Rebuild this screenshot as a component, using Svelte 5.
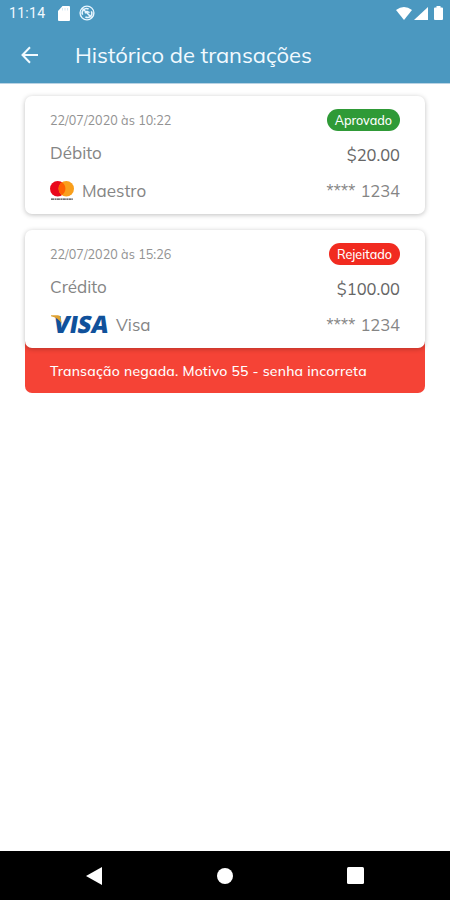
<script>
	const transactions = [
		{
			date: '22/07/2020 às 10:22',
			type: 'Débito',
			brand: 'Maestro',
			status: 'Aprovado',
			approved: true,
			amount: '$20.00',
			card: '1234'
		},
		{
			date: '22/07/2020 às 15:26',
			type: 'Crédito',
			brand: 'Visa',
			status: 'Rejeitado',
			approved: false,
			amount: '$100.00',
			card: '1234',
			error: 'Transação negada. Motivo 55 - senha incorreta'
		}
	];
</script>

<div class="screen">
	<header>
		<div class="status-bar">
			<span class="clock">11:14</span>
			<svg width="12" height="15" viewBox="0 0 12 15">
				<path d="M4.5 0H11a1 1 0 0 1 1 1v13a1 1 0 0 1-1 1H1a1 1 0 0 1-1-1V5z" fill="#fff" />
				<path d="M4.5 2v2.5M7 2v2.5M9.5 2v2.5" stroke="#d5e8f2" stroke-width="1" />
			</svg>
			<svg class="sync" width="16" height="16" viewBox="0 0 16 16" fill="none" stroke="#e8f6ff">
				<circle cx="8" cy="8" r="6.9" stroke-width="1.4" />
				<path d="M3.6 9.8A4.4 4.4 0 0 1 9.6 4M12.4 6.2a4.4 4.4 0 0 1-6 5.8" stroke-width="1.5" />
				<path d="M3.2 3.2l9.6 9.6M5.8 8.2l2.2-1.8 2.6 1.2" stroke-width="1.5" />
			</svg>
			<div class="signals">
				<svg width="16" height="13" viewBox="0 0 16 13">
					<path d="M0 3Q8-3 16 3L8 13z" fill="#fff" />
				</svg>
				<svg width="14" height="13" viewBox="0 0 14 13">
					<path d="M14 0v13H0z" fill="#fff" />
				</svg>
				<svg class="battery" width="9" height="14" viewBox="0 0 9 14">
					<path d="M2.5 0h4v1.5H8a1 1 0 0 1 1 1V13a1 1 0 0 1-1 1H1a1 1 0 0 1-1-1V2.5a1 1 0 0 1 1-1h1.5z" fill="#fff" />
				</svg>
			</div>
		</div>
		<div class="toolbar">
			<svg width="18" height="18" viewBox="0 0 18 18" fill="none" stroke="#f2faff" stroke-width="2">
				<path d="M17 9H2M9 1.3L1.5 9 9 16.7" />
			</svg>
			<h1>Histórico de transações</h1>
		</div>
	</header>

	<main>
		{#each transactions as item}
			<article>
				<div class="card">
					<div class="row top">
						<span class="date">{item.date}</span>
						<span class="badge" class:approved={item.approved}>{item.status}</span>
					</div>
					<div class="row middle">
						<span class="type">{item.type}</span>
						<span class="amount">{item.amount}</span>
					</div>
					<div class="row bottom">
						<div class="brand">
							{#if item.brand === 'Visa'}
								<svg class="visa" width="64" height="44" viewBox="0 -9 64 44">
									<g transform="translate(3.8 0) skewX(-10)">
										<text x="2" y="20.5" textLength="55" lengthAdjust="spacingAndGlyphs" fill="#10519b">VISA</text>
									</g>
									<path d="M1 3.3h6.8q2.3 0 2.8 2.4l1.2 6Q8 5.8 1 4.3z" fill="#dfa233" />
								</svg>
							{:else}
								<svg width="24" height="20" viewBox="0 0 24 20">
									<circle cx="7.7" cy="7.7" r="7.7" fill="#e9081b" />
									<circle cx="16.3" cy="7.7" r="7.7" fill="#f99f1b" />
									<path d="M12 1.3a7.7 7.7 0 0 1 0 12.8 7.7 7.7 0 0 1 0-12.8" fill="#ff5f00" />
									<path d="M1 18.2h22" stroke="#444" stroke-width="1.3" stroke-dasharray="3 .5 2 .4" />
								</svg>
							{/if}
							<span class="brand-name">{item.brand}</span>
						</div>
						<span class="number"><span class="mask">****</span>{item.card}</span>
					</div>
				</div>
				{#if item.error}
					<p>{item.error}</p>
				{/if}
			</article>
		{/each}
	</main>

	<nav>
		<svg width="16" height="18" viewBox="0 0 16 18"><path d="M16 0v18L0 9z" fill="#fff" /></svg>
		<svg width="16" height="16" viewBox="0 0 16 16"><circle cx="8" cy="8" r="8" fill="#fff" /></svg>
		<svg width="17" height="17" viewBox="0 0 17 17"><rect width="17" height="17" rx="1.5" fill="#fff" /></svg>
	</nav>
</div>

<style>
	:global(body) {
		background: #fff;
	}

	.screen {
		display: flex;
		flex-direction: column;
		height: 900px;
		font-family: Muli, Mulish, Lato, sans-serif;
		background: #fff;
		overflow: hidden;
		white-space: nowrap;
	}

	header {
		height: 83px;
		color: #f2faff;
		background: #4b98c0;
		border-bottom: 1px solid #b9d3e4;
	}

	.status-bar {
		display: flex;
		align-items: center;
		height: 26px;
		padding: 0 7px 0 9px;
	}

	.clock {
		width: 49px;
		font: 14px Roboto, sans-serif;
		letter-spacing: 0.3px;
	}

	.sync {
		margin-left: 9px;
	}

	.signals {
		display: flex;
		align-items: center;
		gap: 2px;
		margin-left: auto;
	}

	.battery {
		margin-left: 4px;
	}

	.toolbar {
		display: flex;
		align-items: center;
		height: 58px;
		padding-left: 21px;
	}

	h1 {
		margin: 0 0 0 36px;
		font-size: 22px;
		font-weight: 400;
		letter-spacing: -0.05px;
	}

	main {
		flex: 1;
		display: flex;
		flex-direction: column;
		gap: 16px;
		padding: 12px 25px;
	}

	.card {
		position: relative;
		box-sizing: border-box;
		height: 118px;
		padding: 11px 25px 0;
		border-radius: 7px;
		background: #fff;
		box-shadow: 0 1px 5px rgba(0, 0, 0, 0.25);
	}

	.row {
		display: flex;
		justify-content: space-between;
		align-items: center;
	}

	.top {
		height: 26px;
	}

	.middle {
		height: 42px;
	}

	.bottom {
		height: 31px;
	}

	.date {
		font-size: 12.5px;
		letter-spacing: 0.06px;
		color: #929292;
	}

	.badge {
		box-sizing: border-box;
		height: 22px;
		padding: 0 8px;
		border-radius: 11px;
		font-size: 12.5px;
		font-weight: 500;
		line-height: 22px;
		color: #fff;
		background: #f12b20;
	}

	.approved {
		background: #2f9a37;
	}

	.type,
	.brand-name,
	.number {
		font-size: 17px;
		color: #858585;
	}

	.type {
		padding-bottom: 3px;
	}

	.amount {
		font-size: 16.5px;
		color: #666;
	}

	.brand {
		display: flex;
		align-items: center;
		gap: 8px;
	}

	.brand text {
		font: 800 24px 'Open Sans', sans-serif;
	}

	.visa {
		margin-right: -6px;
		overflow: visible;
	}

	.number {
		font-size: 16.5px;
	}

	.mask {
		margin-right: 5px;
		letter-spacing: -0.2px;
	}

	p {
		margin: -8px 0 0;
		padding: 10px 0 0 25px;
		border-radius: 0 0 7px 7px;
		font-size: 14px;
		font-weight: 500;
		letter-spacing: 0.21px;
		line-height: 43px;
		color: #fff;
		background: #f54336;
	}

	nav {
		display: flex;
		align-items: center;
		justify-content: space-between;
		box-sizing: border-box;
		height: 49px;
		padding: 0 86px;
		background: #000;
	}
</style>
